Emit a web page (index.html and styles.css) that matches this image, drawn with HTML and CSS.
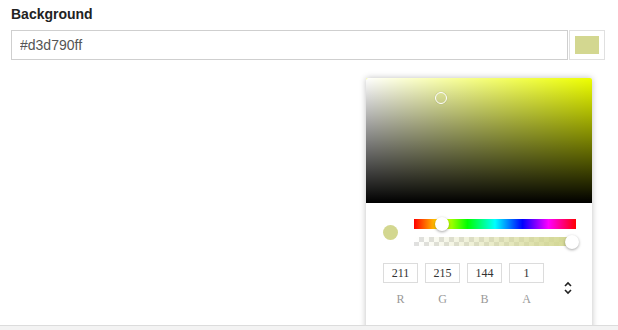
FILE: index.html
```html
<!DOCTYPE html>
<html lang="en">
<head>
  <meta charset="UTF-8" />
  <meta name="viewport" content="width=device-width, initial-scale=1.0"/>
  <title>Background color</title>
  <link rel="stylesheet" href="styles.css">
</head>
<body>
  <div class="panel">
    <div class="field-title">Background</div>

    <div class="color-row">
      <input type="text" class="color-input" value="#d3d790ff" />
      <div class="swatch-box"><div class="swatch"></div></div>
    </div>

    <div class="picker">
      <div class="sv-area">
        <div class="sv-white"></div>
        <div class="sv-black"></div>
        <div class="sv-cursor"></div>
      </div>

      <div class="controls">
        <div class="slider-row">
          <div class="preview-dot"></div>
          <div class="sliders">
            <div class="hue-bar">
              <div class="thumb hue-thumb"></div>
            </div>
            <div class="alpha-bar">
              <div class="alpha-fill"></div>
              <div class="thumb alpha-thumb"></div>
            </div>
          </div>
        </div>

        <div class="fields-row">
          <div class="field">
            <input type="text" value="211" />
            <span>R</span>
          </div>
          <div class="field">
            <input type="text" value="215" />
            <span>G</span>
          </div>
          <div class="field">
            <input type="text" value="144" />
            <span>B</span>
          </div>
          <div class="field">
            <input type="text" value="1" />
            <span>A</span>
          </div>
          <div class="toggle">
            <svg width="10" height="16" viewBox="0 0 10 16">
              <path d="M2 6 L5 3 L8 6" fill="none" stroke="#222" stroke-width="1.6"/>
              <path d="M2 10 L5 13 L8 10" fill="none" stroke="#222" stroke-width="1.6"/>
            </svg>
          </div>
        </div>
      </div>
    </div>
  </div>
</body>
</html>
```

FILE: styles.css
```css
body {
  margin: 0;
  background: #f3f3f3;
  font-family: 'Liberation Sans', Arial, sans-serif;
}

.panel {
  position: relative;
  height: 326px;
  padding: 6px 11px 0;
  box-sizing: border-box;
  background: #fff;
  border-bottom: 1px solid #dcdcdc;
  overflow: hidden;
}

.field-title {
  font-size: 14px;
  line-height: 16px;
  font-weight: bold;
  color: #222;
}

.color-row {
  display: flex;
  margin-top: 8px;
}

.color-input {
  width: 557px;
  height: 30px;
  box-sizing: border-box;
  border: 1px solid #cfcfcf;
  padding: 0 8px;
  font-family: 'Liberation Sans', Arial, sans-serif;
  font-size: 14px;
  color: #555;
  outline: none;
}

.swatch-box {
  width: 36px;
  height: 30px;
  box-sizing: border-box;
  margin-left: 1px;
  border: 1px solid #e0e0e0;
  padding: 5px;
}

.swatch {
  width: 100%;
  height: 100%;
  background: #d3d790;
}

/* popup */
.picker {
  position: absolute;
  left: 366px;
  top: 78px;
  width: 226px;
  height: 260px;
  background: #fff;
  border-radius: 2px;
  box-shadow: 0 0 6px rgba(0,0,0,0.25);
}

.sv-area {
  position: relative;
  height: 125px;
  background: #eeff00;
  border-radius: 2px 2px 0 0;
  overflow: hidden;
}

.sv-white {
  position: absolute;
  inset: 0;
  background: linear-gradient(to right, #fff, rgba(255,255,255,0));
}

.sv-black {
  position: absolute;
  inset: 0;
  background: linear-gradient(to top, #000, rgba(0,0,0,0));
}

.sv-cursor {
  position: absolute;
  left: 69px;
  top: 14px;
  width: 10px;
  height: 10px;
  border: 1px solid #fff;
  border-radius: 50%;
  box-shadow: 0 0 1px rgba(0,0,0,0.3);
}

.controls {
  padding: 16px 16px 0 17px;
}

.slider-row {
  display: flex;
  align-items: center;
}

.preview-dot {
  width: 15px;
  height: 15px;
  border-radius: 50%;
  background: #d3d790;
}

.sliders {
  width: 162px;
  margin-left: 16px;
}

.hue-bar {
  position: relative;
  height: 10px;
  background: linear-gradient(to right, #f00 0%, #ff0 17%, #0f0 33%, #0ff 50%, #00f 67%, #f0f 83%, #f00 100%);
}

.alpha-bar {
  position: relative;
  height: 9px;
  margin-top: 8px;
  background-color: #fff;
  background-image:
    linear-gradient(45deg, #e0e0e0 25%, transparent 25%, transparent 75%, #e0e0e0 75%),
    linear-gradient(45deg, #e0e0e0 25%, transparent 25%, transparent 75%, #e0e0e0 75%);
  background-size: 10px 10px;
  background-position: 0 0, 5px 5px;
}

.alpha-fill {
  position: absolute;
  inset: 0;
  background: linear-gradient(to right, rgba(211,215,144,0), #d3d790);
}

.thumb {
  position: absolute;
  width: 14px;
  height: 14px;
  border-radius: 50%;
  background: #fff;
  box-shadow: 0 1px 3px rgba(0,0,0,0.35);
}

.hue-thumb {
  left: 21px;
  top: -2px;
}

.alpha-thumb {
  right: -3px;
  top: -2.5px;
}

.fields-row {
  display: flex;
  margin-top: 17px;
}

.field {
  display: flex;
  flex-direction: column;
  align-items: center;
  width: 35px;
  margin-right: 7px;
}

.field input {
  width: 35px;
  height: 20px;
  box-sizing: border-box;
  border: 1px solid #dcdcdc;
  padding: 0;
  text-align: center;
  font-family: 'Liberation Serif', serif;
  font-size: 12px;
  color: #333;
  outline: none;
}

.field span {
  margin-top: 9px;
  font-family: 'Liberation Serif', serif;
  font-size: 12px;
  line-height: 14px;
  color: #999;
}

.toggle {
  margin-left: 12px;
  margin-top: 17px;
}

.toggle svg {
  display: block;
}
```
